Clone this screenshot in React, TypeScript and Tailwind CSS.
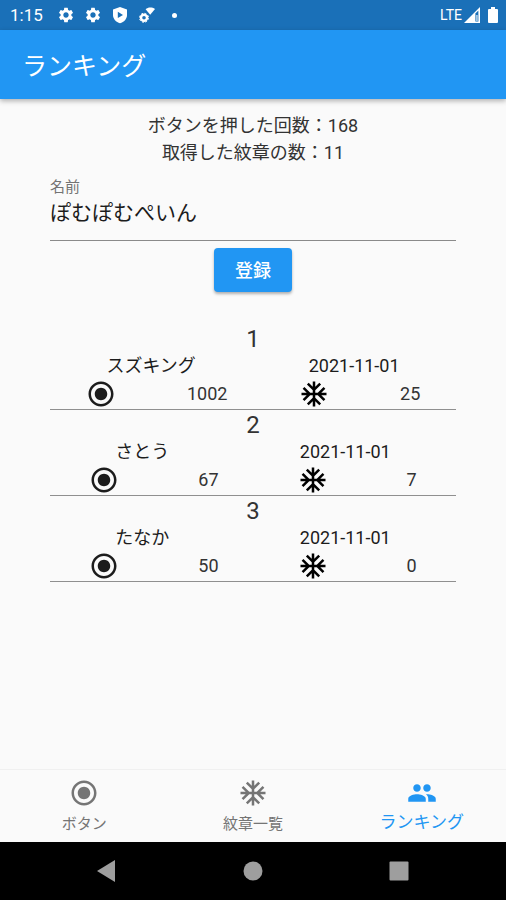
import React from "react";
import { MdAcUnit, MdRadioButtonChecked, MdSettings } from "react-icons/md";

type Entry = { rank: number; name: string; date: string; presses: number; crests: number };

const entries: Entry[] = [
  { rank: 1, name: "スズキング", date: "2021-11-01", presses: 1002, crests: 25 },
  { rank: 2, name: "さとう", date: "2021-11-01", presses: 67, crests: 7 },
  { rank: 3, name: "たなか", date: "2021-11-01", presses: 50, crests: 0 },
];

function PeopleIcon() {
  return (
    <svg viewBox="0 0 24 24" className="size-[30px]" fill="currentColor" aria-hidden="true">
      <path d="M16 11c1.66 0 2.99-1.34 2.99-3S17.66 5 16 5s-3 1.34-3 3 1.34 3 3 3zm-8 0c1.66 0 2.99-1.34 2.99-3S9.66 5 8 5 5 6.34 5 8s1.34 3 3 3zm0 2c-2.33 0-7 1.17-7 3.5V19h14v-2.5c0-2.33-4.67-3.5-7-3.5zm8 0c-.29 0-.62.02-.97.05 1.16.84 1.97 1.97 1.97 3.45V19h6v-2.5c0-2.33-4.67-3.5-7-3.5z" />
    </svg>
  );
}

function StatusBar() {
  return (
    <div className="flex h-[30px] items-center bg-[#1a70b8] pr-2 pl-[10px] text-white">
      <span className="w-[47px] text-[17px] leading-5">1:15</span>
      <div className="flex flex-1 items-center gap-[9px]">
        <MdSettings className="size-[18px]" />
        <MdSettings className="size-[18px]" />
        <svg viewBox="0 0 18 18" className="size-[18px]" aria-hidden="true">
          <path fill="currentColor" d="M9 1 16 3.6V9c0 4-3 7-7 8.2C5 16 2 13 2 9V3.6z" />
          <path fill="#1a70b8" d="M6.8 5.8v6.2L12 8.9z" />
        </svg>
        <svg viewBox="0 0 18 18" className="size-[18px]" aria-hidden="true">
          <path fill="currentColor" d="M7.6 3.2C10.2 1 14 1 17 3L12.2 8.8z" />
          <circle cx="6" cy="11.8" r="3" fill="none" stroke="currentColor" strokeWidth="2.4" />
          <circle cx="6" cy="11.8" r="4.5" fill="none" stroke="currentColor" strokeWidth="1" strokeDasharray="2 1.53" />
        </svg>
        <span className="ml-[7px] size-[5px] rounded-full bg-white" />
      </div>
      <span className="text-[14px] leading-5">LTE</span>
      <svg viewBox="0 0 16 16" className="ml-[2px] size-4" aria-hidden="true">
        <path fill="currentColor" d="M16 0v16H0z" />
        <path fill="#1a70b8" d="M11.4 6.6 14.4 3.6V14.4H11.4z" />
        <path fill="currentColor" d="M12.4 8h1.1v6h-1.1z" />
      </svg>
      <svg viewBox="0 0 10 16" className="ml-2 h-4 w-[10px]" aria-hidden="true">
        <path fill="currentColor" d="M3 0h4v2h2q1 0 1 1v12q0 1-1 1H1q-1 0-1-1V3q0-1 1-1h2z" />
      </svg>
    </div>
  );
}

function RankingItem({ entry }: { entry: Entry }) {
  return (
    <li className="border-b border-[#8f8f8f] text-[18px]">
      <div className="pt-[2px] text-center text-[24px] leading-[27px]">{entry.rank}</div>
      <div className="flex h-[26px] items-center justify-around leading-[26px] text-[#1c1c1c]">
        <span>{entry.name}</span>
        <span>{entry.date}</span>
      </div>
      <div className="flex h-[30px] items-center justify-around leading-[26px]">
        <MdRadioButtonChecked className="size-[30px] text-[#1c1c1c]" />
        <span>{entry.presses}</span>
        <MdAcUnit className="size-[30px] text-black" />
        <span>{entry.crests}</span>
      </div>
    </li>
  );
}

export default function App() {
  return (
    <div
      lang="ja"
      className="flex min-h-screen flex-col bg-[#fafafa] font-[Roboto,'Noto_Sans_CJK_JP',sans-serif] text-[#333333]"
    >
      <StatusBar />
      <header className="z-10 flex h-[69px] items-center bg-[#2196f3] px-[22px] pt-1 shadow-[0_2px_5px_rgba(0,0,0,0.3)]">
        <h1 className="text-[25px] leading-8 font-normal text-white">ランキング</h1>
      </header>

      <main className="flex flex-1 flex-col px-[50px] pt-[13px]">
        <div className="text-center text-[18px] leading-[27px]">
          <p>ボタンを押した回数：168</p>
          <p>取得した紋章の数：11</p>
        </div>

        <form className="flex flex-col" onSubmit={(e) => e.preventDefault()}>
          <label htmlFor="name" className="mt-[11px] text-[15px] leading-5 text-[#737373]">
            名前
          </label>
          <input
            id="name"
            type="text"
            defaultValue="ぽむぽむぺいん"
            className="h-[44px] w-full border-b border-[#8a8a8a] bg-transparent pb-[15px] text-[21px] leading-7 text-[#1c1c1c] outline-none"
          />
          <button
            type="submit"
            className="mt-[7px] h-11 w-[78px] self-center rounded bg-[#2196f3] pt-[2px] text-[18px] leading-6 font-medium text-white shadow-[0_2px_3px_rgba(0,0,0,0.3)]"
          >
            登録
          </button>
        </form>

        <ol className="mt-8">
          {entries.map((entry) => (
            <RankingItem key={entry.rank} entry={entry} />
          ))}
        </ol>
      </main>

      <nav className="grid h-[73px] grid-cols-3 border-t border-[#f0f0f0] text-[15px] leading-6 text-[#757575]">
        <button type="button" className="flex flex-col items-center gap-1 pt-2">
          <MdRadioButtonChecked className="size-[30px]" />
          ボタン
        </button>
        <button type="button" className="flex flex-col items-center gap-1 pt-2">
          <MdAcUnit className="size-[30px]" />
          紋章一覧
        </button>
        <button
          type="button"
          aria-current="page"
          className="flex flex-col items-center gap-[2px] pt-2 text-[17px] leading-6 text-[#2196f3]"
        >
          <PeopleIcon />
          ランキング
        </button>
      </nav>

      <div className="grid h-[58px] grid-cols-3 items-center justify-items-center bg-black px-[34px] text-[#9e9e9e]">
        <button type="button" aria-label="戻る">
          <svg viewBox="0 0 22 22" className="size-[22px]" aria-hidden="true">
            <path fill="currentColor" d="M19 0v22L1 11z" />
          </svg>
        </button>
        <button type="button" aria-label="ホーム">
          <svg viewBox="0 0 20 20" className="size-5" aria-hidden="true">
            <circle cx="10" cy="10" r="9.5" fill="currentColor" />
          </svg>
        </button>
        <button type="button" aria-label="履歴">
          <svg viewBox="0 0 20 20" className="size-5" aria-hidden="true">
            <rect x="0.5" y="0.5" width="19" height="19" rx="1" fill="currentColor" />
          </svg>
        </button>
      </div>
    </div>
  );
}
